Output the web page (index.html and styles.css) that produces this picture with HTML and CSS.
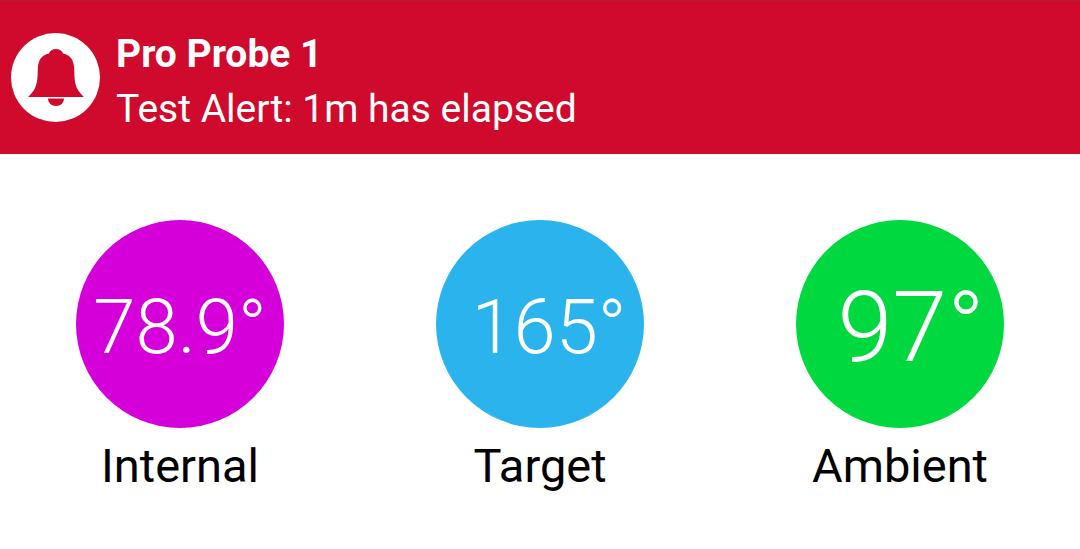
FILE: index.html
```html
<!DOCTYPE html>
<html lang="en">
<head>
    <meta charset="UTF-8">
    <title>Pro Probe 1</title>
    <link rel="stylesheet" href="styles.css">
</head>
<body>
    <div class="alert">
        <div class="alert-icon">
            <svg width="56" height="57" viewBox="0 0 56 57">
                <path d="M28 0c-3.500 0-6 1.500-7 4.500C13 6 10 12 9.800 20 9.500 29 9.500 35 6 41 4.500 43.500 2 46 0 48h56c-2-2-4.500-4.500-6-7-3.500-6-3.500-12-3.800-21C46 12 43 6 35 4.500 34 1.500 31.500 0 28 0z" fill="#cf0a2c"/>
                <path d="M20 49.500h16c0 4.500-3.500 7.500-8 7.500s-8-3-8-7.500z" fill="#cf0a2c"/>
            </svg>
        </div>
        <div class="alert-text">
            <div class="alert-title">Pro Probe 1</div>
            <div class="alert-msg">Test Alert: 1m has elapsed</div>
        </div>
    </div>
    <div class="temps">
        <div class="temp">
            <div class="circle internal">78.9°</div>
            <div class="label">Internal</div>
        </div>
        <div class="temp">
            <div class="circle target">165°</div>
            <div class="label">Target</div>
        </div>
        <div class="temp">
            <div class="circle ambient">97°</div>
            <div class="label">Ambient</div>
        </div>
    </div>
</body>
</html>
```

FILE: styles.css
```css
body {
    margin: 0;
    background: white;
    font-family: Roboto, sans-serif;
}
.alert {
    display: flex;
    align-items: center;
    height: 154px;
    background-color: #cf0a2c;
    border-top: 1px solid #b31c38;
    color: white;
    padding-left: 11px;
    box-sizing: border-box;
}
.alert-icon {
    width: 89px;
    height: 89px;
    border-radius: 50%;
    background: white;
    display: flex;
    align-items: center;
    justify-content: center;
    margin-right: 16px;
}
.alert-text {
    padding-top: 9px;
}
.alert-title {
    font-size: 39px;
    font-weight: 700;
    line-height: 54px;
}
.alert-msg {
    font-size: 39px;
    line-height: 56px;
}
.temps {
    display: grid;
    grid-template-columns: repeat(3, 360px);
    padding-top: 66px;
}
.temp {
    display: flex;
    flex-direction: column;
    align-items: center;
}
.circle {
    width: 208px;
    height: 208px;
    border-radius: 50%;
    color: white;
    display: flex;
    align-items: center;
    justify-content: center;
    font-size: 76px;
    font-weight: 300;
    box-sizing: border-box;
    padding-top: 6px;
}
.internal { background-color: #d500d9; }
.target { background-color: #2ab3ed; padding-left: 18px; }
.ambient { background-color: #00d840; font-size: 99px; padding-left: 22px; }
.label {
    font-size: 47px;
    color: black;
    line-height: 76px;
}
```
